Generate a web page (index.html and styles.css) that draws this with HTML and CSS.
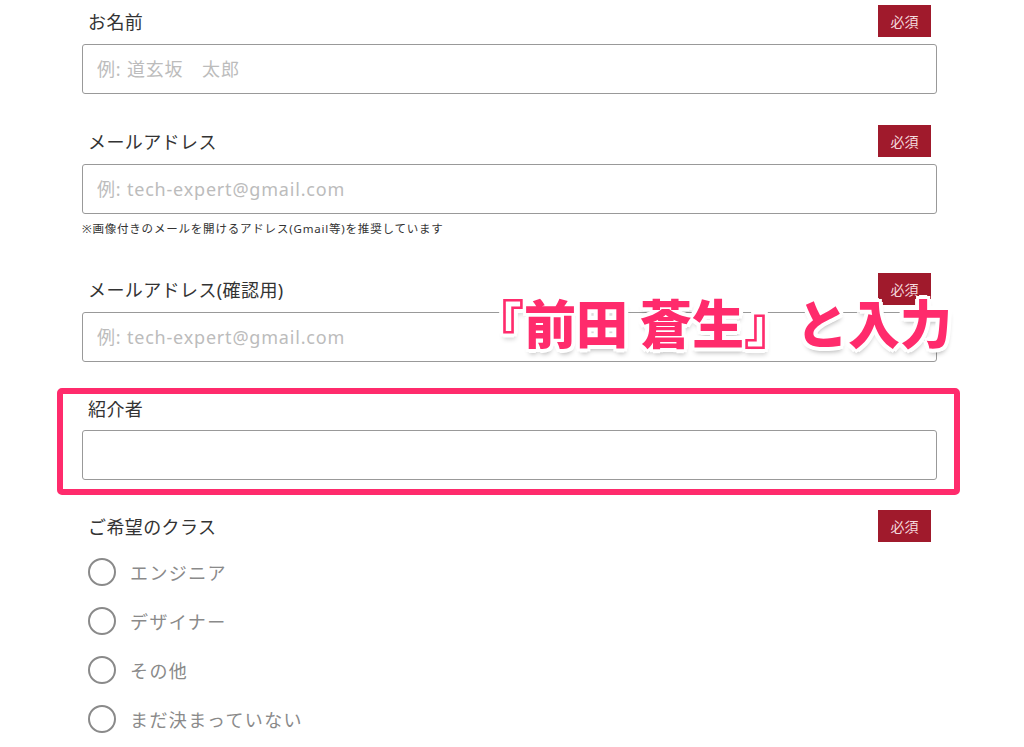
FILE: index.html
```html
<!DOCTYPE html>
<html lang="ja">
<head>
  <meta charset="UTF-8" />
  <meta name="viewport" content="width=device-width, initial-scale=1.0" />
  <title>お申し込みフォーム</title>
  <link rel="stylesheet" href="styles.css">
</head>
<body>

  <form class="entry-form">

    <div class="field">
      <div class="field-head">
        <label for="name">お名前</label>
        <span class="required">必須</span>
      </div>
      <input id="name" type="text" placeholder="例: 道玄坂　太郎">
    </div>

    <div class="field">
      <div class="field-head">
        <label for="email">メールアドレス</label>
        <span class="required">必須</span>
      </div>
      <input id="email" type="text" placeholder="例: tech-expert@gmail.com">
      <p class="note">※画像付きのメールを開けるアドレス(Gmail等)を推奨しています</p>
    </div>

    <div class="field">
      <div class="field-head">
        <label for="email2">メールアドレス(確認用)</label>
        <span class="required">必須</span>
      </div>
      <input id="email2" type="text" placeholder="例: tech-expert@gmail.com">
    </div>

    <div class="field highlight">
      <div class="field-head">
        <label for="referrer">紹介者</label>
      </div>
      <input id="referrer" type="text">
    </div>

    <div class="field">
      <div class="field-head">
        <label>ご希望のクラス</label>
        <span class="required">必須</span>
      </div>
      <ul class="radios">
        <li><span class="circle"></span>エンジニア</li>
        <li><span class="circle"></span>デザイナー</li>
        <li><span class="circle"></span>その他</li>
        <li><span class="circle"></span>まだ決まっていない</li>
      </ul>
    </div>

  </form>

  <!-- 説明用の注釈 -->
  <div class="callout">『前田 蒼生』と入力</div>

</body>
</html>
```

FILE: styles.css
```css
body {
  margin: 0;
  padding: 0;
  background: #fff;
  color: #333;
  font-family: "Noto Sans", "Noto Sans CJK JP", sans-serif;
  height: 747px;
  overflow: hidden;
  position: relative;
}

.entry-form {
  width: 855px;
  margin-left: 82px;
  padding-top: 5px;
}

.field {
  position: relative;
  margin-bottom: 31px;
}

.field-head {
  display: flex;
  justify-content: space-between;
  align-items: center;
  height: 32px;
  padding-left: 6px;
  padding-right: 6px;
}

.field-head label {
  font-size: 18px;
  letter-spacing: 0.4px;
  color: #333;
}

.required {
  display: flex;
  align-items: center;
  justify-content: center;
  width: 53px;
  height: 32px;
  background: #a01a2c;
  color: #f4d9dd;
  font-size: 14px;
}

.field input {
  display: block;
  box-sizing: border-box;
  width: 100%;
  height: 50px;
  margin-top: 7px;
  padding: 0 14px;
  border: 1px solid #999;
  border-radius: 3px;
  font-family: inherit;
  font-size: 18px;
  letter-spacing: 0.8px;
  color: #333;
  background: #fff;
}

.field input::placeholder {
  color: #bcbcbc;
}

.note {
  margin: 7px 0 -2px;
  font-size: 11.5px;
  letter-spacing: 0.8px;
  line-height: 16px;
  color: #333;
}

.field:nth-child(2) {
  margin-bottom: 38px;
}

.highlight::before {
  content: '';
  position: absolute;
  left: -25px;
  top: -5px;
  right: -23px;
  bottom: -15px;
  border: 6px solid #ff2b6c;
  border-radius: 5px;
}

.highlight {
  margin-bottom: 30px;
}

.highlight .field-head {
  height: 28px;
  align-items: flex-end;
}

.highlight input {
  margin-top: 9px;
}

.radios {
  list-style: none;
  margin: 5px 0 0;
  padding: 0 0 0 6px;
}

.radios li {
  display: flex;
  align-items: center;
  gap: 14px;
  height: 49px;
  font-size: 18px;
  letter-spacing: 1.4px;
  color: #8a8a8a;
}

.circle {
  box-sizing: border-box;
  width: 28px;
  height: 28px;
  border: 2px solid #8a8a8a;
  border-radius: 50%;
}

.callout {
  position: absolute;
  left: 472px;
  top: 282px;
  font-family: "Noto Sans CJK JP", sans-serif;
  font-size: 52px;
  font-weight: 900;
  line-height: 80px;
  white-space: nowrap;
  color: #ff2b6c;
  text-shadow:
    4px 0 0 #fff, -4px 0 0 #fff, 0 4px 0 #fff, 0 -4px 0 #fff,
    3px 3px 0 #fff, -3px 3px 0 #fff, 3px -3px 0 #fff, -3px -3px 0 #fff,
    1px 5px 5px rgba(0, 0, 0, 0.3);
}
```
